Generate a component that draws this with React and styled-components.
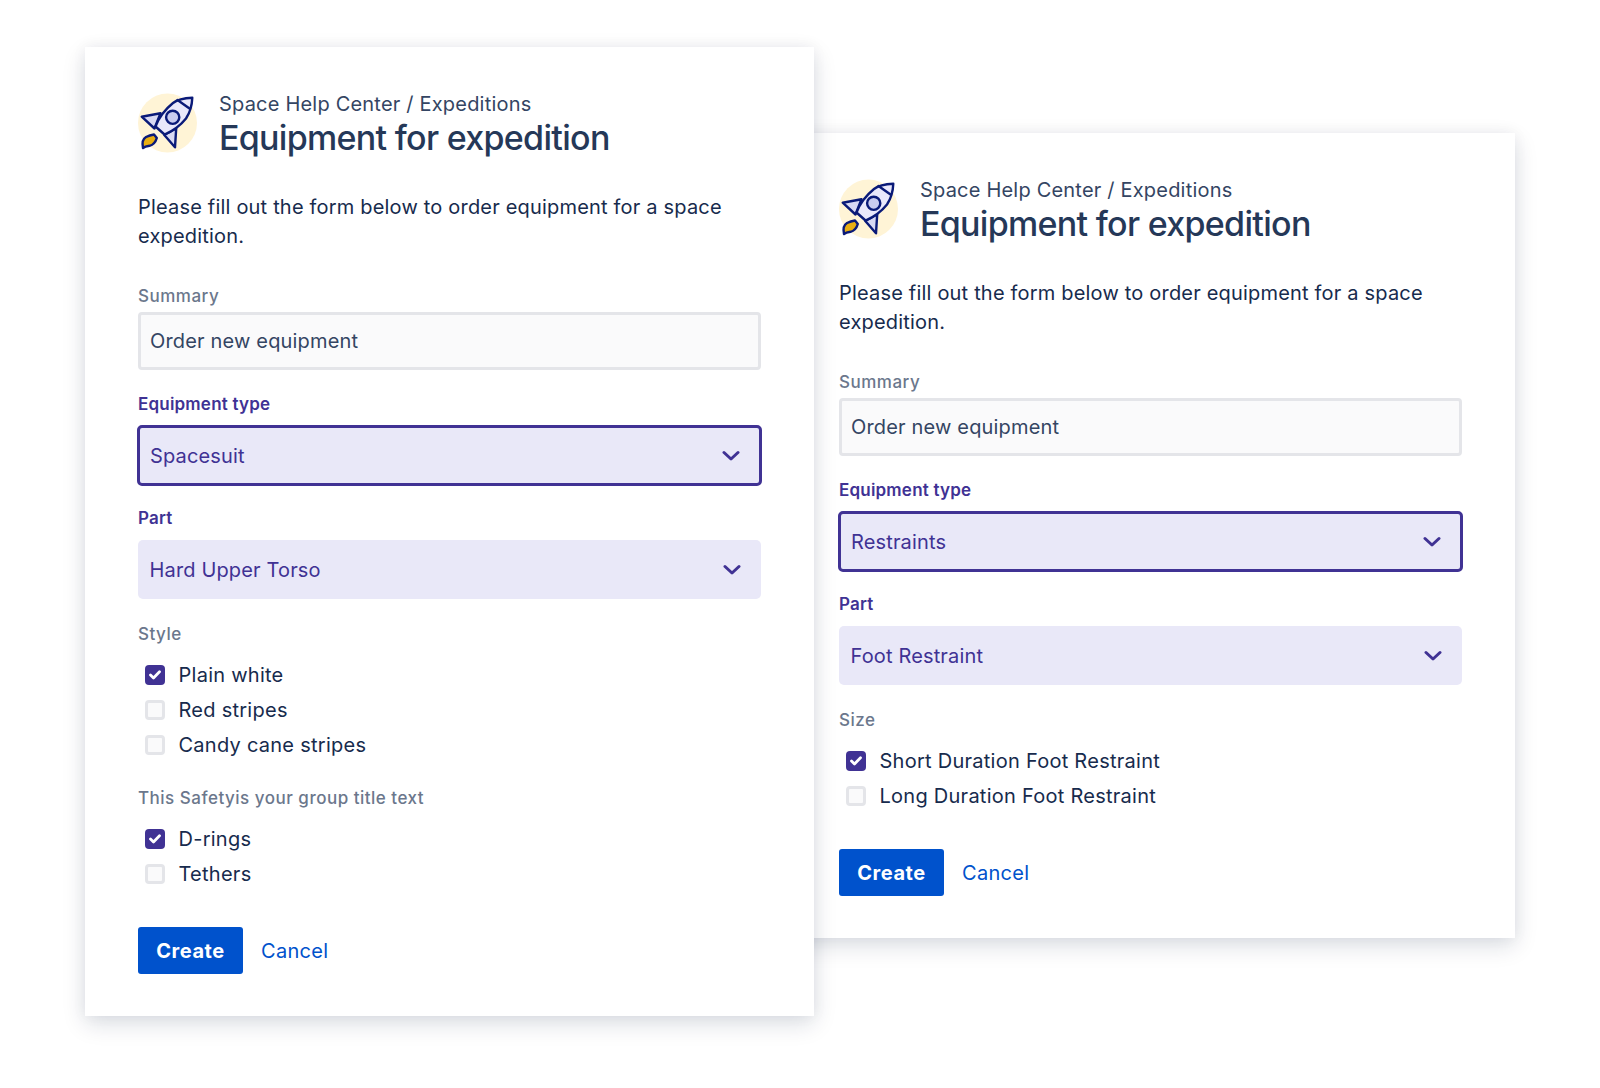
import React from 'react';
import styled, { createGlobalStyle } from 'styled-components';

const GlobalStyle = createGlobalStyle`
  html, body { margin: 0; padding: 0; background: #fff; }
  body { font-family: Inter, "Liberation Sans", sans-serif; }
`;

const forms = [
  {
    equipment: 'Spacesuit',
    part: 'Hard Upper Torso',
    groups: [
      {
        title: 'Style',
        options: [
          { label: 'Plain white', checked: true },
          { label: 'Red stripes' },
          { label: 'Candy cane stripes' },
        ],
      },
      {
        title: 'This Safetyis your group title text',
        options: [{ label: 'D-rings', checked: true }, { label: 'Tethers' }],
      },
    ],
  },
  {
    equipment: 'Restraints',
    part: 'Foot Restraint',
    groups: [
      {
        title: 'Size',
        options: [
          { label: 'Short Duration Foot Restraint', checked: true },
          { label: 'Long Duration Foot Restraint' },
        ],
      },
    ],
  },
];

const RocketLogo = () => (
  <svg width="60" height="60" viewBox="0 0 60 60" fill="none">
    <circle cx="29.5" cy="30" r="29.5" fill="#FFF4D6" />
    <g stroke="#0A1A78" strokeWidth="2.4" strokeLinejoin="round" strokeLinecap="round">
      <path d="M3.7 23.7 L22.5 20.3 L16.5 35.5 Z" fill="#D8D9F3" />
      <path d="M26.3 42 L37 54.3 L38.2 35.3 Z" fill="#D8D9F3" />
      <path d="M54.3 4.7 C46 5 40 6 35 10 C27 16.5 21 24 17.5 33.5 L26.5 41.5 C35 38 42 33 48 25.5 C52 19.5 54 12.5 54.3 4.7 Z" fill="#E9E8FB" />
      <path d="M39.5 7 L51.5 15.5" />
      <circle cx="34.7" cy="24.3" r="6.6" fill="#C9CCEF" />
      <path d="M5 55 C4 50 4.5 46 8 44 C11 42.5 14 41.8 16 41.5 L18.8 45 C17.5 49.5 15 52 11.5 52.8 C9 53.2 6.5 53.8 5 55 Z" fill="#E8AE12" />
    </g>
  </svg>
);

const Chevron = () => (
  <svg width="18" height="12" viewBox="0 0 18 12" fill="none">
    <path d="M2 2.5 L9 9 L16 2.5" stroke="#403294" strokeWidth="3" strokeLinecap="round" strokeLinejoin="round" />
  </svg>
);

const Tick = () => (
  <svg width="12" height="10" viewBox="0 0 12 10" fill="none">
    <path d="M1.5 5 L4.5 8 L10.5 1.8" stroke="#fff" strokeWidth="2.8" strokeLinecap="round" strokeLinejoin="round" />
  </svg>
);

const Form = ({ data, front }) => (
  <Card $front={front}>
    <Header>
      <RocketLogo />
      <Titles>
        <Breadcrumb>Space Help Center / Expeditions</Breadcrumb>
        <Title>Equipment for expedition</Title>
      </Titles>
    </Header>
    <Intro>Please fill out the form below to order equipment for a space expedition.</Intro>

    <Label $top={33} $gap={4}>Summary</Label>
    <TextField>Order new equipment</TextField>

    <Label $active $gap={9}>Equipment type</Label>
    <Select $focused>
      {data.equipment}
      <Chevron />
    </Select>

    <Label $active $top={20} $gap={10}>Part</Label>
    <Select>
      {data.part}
      <Chevron />
    </Select>

    {data.groups.map((group) => (
      <Group key={group.title}>
        <Label $top={23} $gap={7}>{group.title}</Label>
        <Options>
          {group.options.map((option) => (
            <Option key={option.label}>
              <Box $checked={option.checked}>{option.checked && <Tick />}</Box>
              {option.label}
            </Option>
          ))}
        </Options>
      </Group>
    ))}

    <Actions>
      <CreateButton>Create</CreateButton>
      <CancelLink>Cancel</CancelLink>
    </Actions>
  </Card>
);

const App = () => (
  <>
    <GlobalStyle />
    <Page>
      <Form data={forms[0]} front />
      <Form data={forms[1]} />
    </Page>
  </>
);

const Page = styled.div`
  display: flex;
  align-items: flex-start;
  width: 1600px;
  height: 1088px;
  padding: 47px 0 0 85px;
  box-sizing: border-box;
  overflow: hidden;
  background: #fff;
`;

const Card = styled.div`
  position: relative;
  z-index: ${(p) => (p.$front ? 2 : 1)};
  flex: none;
  box-sizing: border-box;
  width: 729px;
  padding: 46px 53px 42px;
  margin: ${(p) => (p.$front ? '0' : '86px 0 0 -28px')};
  background: #fff;
  box-shadow: 0 8px 22px rgba(9, 30, 66, 0.14), 0 0 14px rgba(9, 30, 66, 0.05);
`;

const Header = styled.div`
  display: flex;
  align-items: flex-start;
  gap: 21px;
`;

const Titles = styled.div`
  display: flex;
  flex-direction: column;
  margin-top: -1px;
`;

const Breadcrumb = styled.div`
  font-size: 20px;
  line-height: 25px;
  letter-spacing: 0.2px;
  color: #344563;
`;

const Title = styled.div`
  font-size: 34px;
  line-height: 42px;
  font-weight: 500;
  letter-spacing: -0.7px;
  color: #253858;
`;

const Intro = styled.p`
  margin: 34px 0 0;
  font-size: 20px;
  line-height: 29px;
  letter-spacing: 0.19px;
  color: #172b4d;
`;

const Label = styled.div`
  margin: ${(p) => p.$top ?? 22}px 0 ${(p) => p.$gap}px;
  font-size: 17px;
  line-height: 24px;
  font-weight: ${(p) => (p.$active ? 600 : 500)};
  letter-spacing: ${(p) => (p.$active ? '0.2px' : '0.5px')};
  color: ${(p) => (p.$active ? '#403294' : '#6b778c')};
`;

const TextField = styled.div`
  box-sizing: border-box;
  height: 58px;
  padding: 0 9px;
  display: flex;
  align-items: center;
  font-size: 20px;
  letter-spacing: 0.17px;
  color: #344563;
  background: #fafafb;
  border: 3px solid #e4e5e9;
  border-radius: 4px;
`;

const Select = styled.div`
  box-sizing: border-box;
  display: flex;
  align-items: center;
  justify-content: space-between;
  height: ${(p) => (p.$focused ? '61px' : '59px')};
  margin: ${(p) => (p.$focused ? '0 -1px' : '0')};
  padding: ${(p) => (p.$focused ? '0 19px 0 10px' : '0 20px 0 11.5px')};
  font-size: 20px;
  letter-spacing: 0.15px;
  color: #403294;
  background: #e9e8f8;
  border: ${(p) => (p.$focused ? '3px solid #403294' : 'none')};
  border-radius: 5px;
`;

const Group = styled.div`
  display: flex;
  flex-direction: column;

  & + & {
    margin-top: 1px;
  }
`;

const Options = styled.div`
  display: flex;
  flex-direction: column;
  padding: 4px 0 0 7px;
`;

const Option = styled.div`
  display: flex;
  align-items: center;
  gap: 13.5px;
  height: 35px;
  font-size: 20px;
  letter-spacing: 0.26px;
  color: #172b4d;
`;

const Box = styled.span`
  flex: none;
  box-sizing: border-box;
  display: flex;
  align-items: center;
  justify-content: center;
  width: 20px;
  height: 20px;
  border-radius: 4px;
  background: ${(p) => (p.$checked ? '#403294' : '#fafafb')};
  border: ${(p) => (p.$checked ? 'none' : '3px solid #e4e5e9')};
`;

const Actions = styled.div`
  display: flex;
  align-items: center;
  gap: 18px;
  margin-top: 36px;
`;

const CreateButton = styled.div`
  box-sizing: border-box;
  display: flex;
  align-items: center;
  justify-content: center;
  width: 105px;
  height: 47px;
  font-size: 20px;
  font-weight: 700;
  letter-spacing: 0.55px;
  color: #fff;
  background: #0052cc;
  border-radius: 3px;
`;

const CancelLink = styled.div`
  font-size: 20px;
  letter-spacing: 0.3px;
  color: #0052cc;
`;

export default App;
